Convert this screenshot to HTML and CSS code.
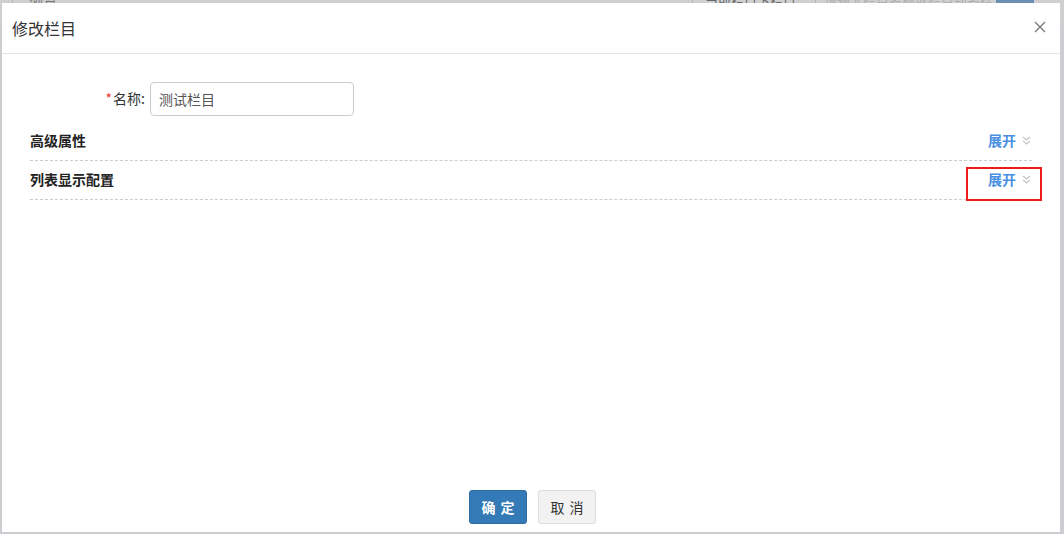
FILE: index.html
```html
<!DOCTYPE html>
<html lang="zh-CN">
<head>
<meta charset="UTF-8">
<meta name="viewport" content="width=device-width, initial-scale=1.0">
<title>修改栏目</title>
<link rel="stylesheet" href="styles.css">
</head>
<body>
<div class="page-bar">
    <div class="crumb">浏览</div>
    <div class="search">
        <div class="search-type">当前栏目下栏目</div>
        <div class="search-input">请输入栏目名称或栏目别名搜索</div>
        <div class="search-btn"></div>
    </div>
</div>

<div class="modal">
    <div class="modal-header">
        <span class="modal-title">修改栏目</span>
        <span class="modal-close">
            <svg width="12" height="12" viewBox="0 0 12 12"><path d="M1 1L11 11M11 1L1 11" stroke="#777" stroke-width="1.3" fill="none"/></svg>
        </span>
    </div>
    <div class="modal-body">
        <div class="form-row">
            <label class="form-label" for="name"><span class="req">*</span>名称:</label>
            <input type="text" id="name" class="form-input" value="测试栏目">
        </div>
        <div class="section">
            <span class="section-title">高级属性</span>
            <span class="toggle">展开
                <svg class="chev" width="9" height="9" viewBox="0 0 9 9"><path d="M1 1L4.5 4L8 1M1 5L4.5 8L8 5" stroke="#c4c4c4" stroke-width="1.2" fill="none"/></svg>
            </span>
        </div>
        <div class="section">
            <span class="section-title">列表显示配置</span>
            <span class="toggle">展开
                <svg class="chev" width="9" height="9" viewBox="0 0 9 9"><path d="M1 1L4.5 4L8 1M1 5L4.5 8L8 5" stroke="#c4c4c4" stroke-width="1.2" fill="none"/></svg>
            </span>
            <div class="mark"></div>
        </div>
    </div>
    <div class="modal-footer">
        <button class="btn btn-primary">确定</button>
        <button class="btn btn-default">取消</button>
    </div>
</div>
</body>
</html>
```

FILE: styles.css
```css
body {
    margin: 0;
    padding: 0;
    background-color: #cbcdd0;
    font-family: "Noto Sans CJK SC", "Liberation Sans", sans-serif;
    font-size: 14px;
    color: #333;
    height: 534px;
    overflow: hidden;
}

.page-bar {
    display: flex;
    justify-content: space-between;
    height: 40px;
    background-color: #cfcfcf;
    margin-top: -14px;
}

.crumb {
    margin-left: 12px;
    padding-left: 16px;
    border-left: 1px solid #b5b5b5;
    line-height: 30px;
    color: #777;
}

.search {
    display: flex;
    margin-right: 30px;
}

.search-type {
    width: 110px;
    padding-left: 12px;
    border: 1px solid #b5b5b5;
    line-height: 28px;
    color: #666;
    font-size: 13px;
}

.search-input {
    width: 172px;
    padding-left: 8px;
    line-height: 28px;
    color: #b0b0b0;
    font-size: 13px;
    background-color: #cfcfcf;
}

.search-btn {
    width: 38px;
    height: 30px;
    background-color: #6b8fb3;
}

.modal {
    position: absolute;
    top: 3px;
    left: 2px;
    width: 1058px;
    height: 529px;
    background-color: #fff;
    display: flex;
    flex-direction: column;
}

.modal-header {
    display: flex;
    justify-content: space-between;
    align-items: center;
    height: 50px;
    padding: 0 14px 0 10px;
    border-bottom: 1px solid #e5e5e5;
}

.modal-title {
    font-size: 16px;
    color: #333;
}

.modal-close {
    display: flex;
    margin-top: -2px;
}

.modal-body {
    flex: 1;
    padding: 28px 28px 0 28px;
}

.form-row {
    display: flex;
    align-items: center;
    margin-bottom: 6px;
}

.form-label {
    width: 115px;
    margin-right: 5px;
    text-align: right;
    color: #333;
    margin-top: -2px;
}

.req {
    color: #e33;
    margin-right: 1px;
}

.form-input {
    width: 204px;
    height: 34px;
    box-sizing: border-box;
    padding: 0 8px;
    border: 1px solid #ccc;
    border-radius: 4px;
    font-family: inherit;
    font-size: 14px;
    color: #555;
}

.section {
    position: relative;
    display: flex;
    justify-content: space-between;
    align-items: center;
    height: 36px;
    padding-bottom: 2px;
    border-bottom: 1px dashed #ccc;
}

.section-title {
    font-weight: bold;
    color: #222;
}

.toggle {
    display: flex;
    align-items: center;
    color: #4a90e2;
    font-weight: bold;
    margin-right: 1px;
}

.chev {
    margin-left: 6px;
}

.mark {
    position: absolute;
    top: 6px;
    right: -10px;
    width: 72px;
    height: 30px;
    border: 2px solid #ee1c1c;
}

.modal-footer {
    display: flex;
    justify-content: center;
    gap: 11px;
    padding: 0 0 8px 3px;
}

.btn {
    width: 58px;
    height: 34px;
    padding: 0;
    border-radius: 3px;
    font-family: inherit;
    font-size: 14px;
    letter-spacing: 5px;
    text-indent: 5px;
    white-space: nowrap;
    cursor: pointer;
}

.btn-primary {
    background-color: #337ab7;
    border: 1px solid #2e6da4;
    color: #fff;
    font-weight: bold;
}

.btn-default {
    background-color: #f2f2f2;
    border: 1px solid #ddd;
    color: #333;
}
```
